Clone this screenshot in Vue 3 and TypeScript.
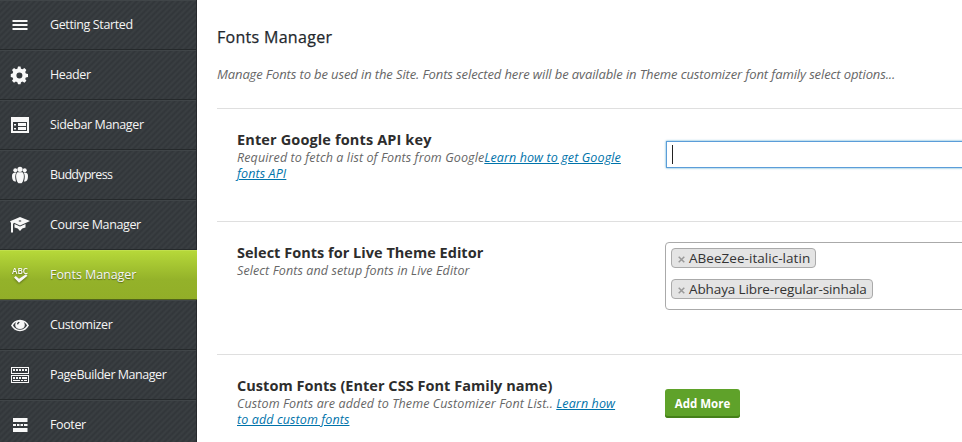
<script setup lang="ts">
interface MenuItem {
  id: string
  label: string
}

interface Chip {
  id: string
  label: string
}

const activeId = 'fonts'

const items: MenuItem[] = [
  { id: 'start', label: 'Getting Started' },
  { id: 'header', label: 'Header' },
  { id: 'sidebar', label: 'Sidebar Manager' },
  { id: 'buddypress', label: 'Buddypress' },
  { id: 'course', label: 'Course Manager' },
  { id: 'fonts', label: 'Fonts Manager' },
  { id: 'customizer', label: 'Customizer' },
  { id: 'pagebuilder', label: 'PageBuilder Manager' },
  { id: 'footer', label: 'Footer' },
]

const chips: Chip[] = [
  { id: 'abeezee', label: 'ABeeZee-italic-latin' },
  { id: 'abhaya', label: 'Abhaya Libre-regular-sinhala' },
]
</script>

<template>
  <div class="panel">
    <nav class="menu">
      <a v-for="item in items" :key="item.id" class="item" :class="{ active: item.id === activeId }">
        <svg class="icon" viewBox="0 0 20 20" width="20" height="20">
          <path v-if="item.id === 'start'" d="M2.5 5h15v2h-15zM2.5 9h15v2h-15zM2.5 13h15v2h-15z" />
          <path
            v-else-if="item.id === 'header'"
            fill-rule="evenodd"
            d="M18 12v-3l-2.2-.5-.6-1.5 1.2-1.9-2-2-1.9 1.2-1.5-.6L10.500 1.500h-2.500l-.6 2.200-1.500.6L4 3.100l-2 2L3.200 7l-.6 1.500L.8 9v3l1.800.4.6 1.500L2 15.800l2 2 1.900-1.200 1.500.6.600 2h2.500l.5-2 1.500-.6 1.900 1.200 2-2-1.200-1.900.6-1.500zM9.400 13.500a3 3 0 1 1 0-6 3 3 0 0 1 0 6z"
          />
          <path
            v-else-if="item.id === 'sidebar'"
            fill-rule="evenodd"
            d="M1 2h18v16H1zM3 7v9h14V7zM4 9h2v1.500H4zM8 8h8v3H8zM4 13h2v1.500H4zM8 12h8v3H8z"
          />
          <g v-else-if="item.id === 'buddypress'">
            <circle cx="5.300" cy="5.300" r="2" />
            <circle cx="14.700" cy="5.300" r="2" />
            <circle cx="10" cy="4.300" r="2.600" />
            <path d="M5.500 7.500C3 7.500 2 9 2 11c0 3 1 5.500 3 5.500h1C4.900 13 4.900 10 6.300 7.500zM14.500 7.500c2.500 0 3.500 1.500 3.500 3.500 0 3-1 5.500-3 5.500h-1c1.100-3.500 1.100-6.500-.3-9zM7.500 7.300h5c1.300 1 1.600 3 1.300 5.500-.4 3-1.400 5-2.300 5.400h-3c-.9-.4-1.900-2.400-2.300-5.400-.3-2.500 0-4.500 1.300-5.500z" />
          </g>
          <g v-else-if="item.id === 'course'">
            <path fill-rule="evenodd" d="M10 2l10 4-10 4.500-6-2.700L3 9v8.500H1V8L0 6.300zM10 5.200l-1.700.8 1.700.7 1.700-.7z" />
            <path d="M4.500 9L10 11.500 15.500 9v3.500l-3.200 1L10 16l-2.300-2.500-3.200-1z" />
          </g>
          <g v-else-if="item.id === 'fonts'">
            <text x="2" y="8.500" class="abc" textLength="16" lengthAdjust="spacingAndGlyphs">ABC</text>
            <path d="M4 12.500l1.800-1.600 3.200 2.800 7-4.500 1.500 1.600L9 17.700z" />
          </g>
          <path
            v-else-if="item.id === 'customizer'"
            fill-rule="evenodd"
            d="M1 10.500C3 7 6 4.800 10 4.800s7 2.200 9 5.700c-2 3.500-5 5.700-9 5.700s-7-2.200-9-5.700zM3 10.500c1.500 2.400 4 4.200 7 4.200s5.500-1.800 7-4.200C16.400 9 15.200 7.600 13.800 6.900c.7.900 1 2 1 3.200 0 2.400-2.100 4-4.800 4s-4.800-1.600-4.800-4c0-1.200.3-2.300 1-3.200C4.800 7.600 3.600 9 3 10.500zM9 6.800c-1.300.3-2 1.200-2 2.500l1.200.3c.1-1 .6-1.500 1.500-1.800z"
          />
          <path
            v-else-if="item.id === 'pagebuilder'"
            fill-rule="evenodd"
            d="M1 2h18v7H1zM2 3v5h16V3zM3 4h2v2H3zM6 4h2v2H6zM9 4h2v2H9zM12 4h2v2h-2zM15 4h2v2h-2zM1 10h18v8H1zM2 11v6h16v-6zM3 12h2v2H3zM6 12h2v2H6zM9 12h2v2H9zM12 12h5v2h-5zM3 15h7v1H3zM11 15h2v1h-2zM14 15h3v1h-3z"
          />
          <path v-else d="M3 3h14.500v4H3zM3 9h3v2H3zM7 9h2.500v2H7zM10.500 9H13v2h-2.500zM14 9h3.500v2H14zM3 13h14.500v4H3z" />
        </svg>
        <span class="label" :class="item.id">{{ item.label }}</span>
      </a>
    </nav>

    <main class="content">
      <h1>Fonts Manager</h1>
      <p class="intro">Manage Fonts to be used in the Site. Fonts selected here will be available in Theme customizer font family select options...</p>

      <section class="row">
        <div class="info">
          <h2 class="t1">Enter Google fonts API key</h2>
          <p class="d1">
            Required to fetch a list of Fonts from Google<a>Learn how to get Google<br />fonts API</a>
          </p>
        </div>
        <div class="field">
          <div class="input"><i class="caret"></i></div>
        </div>
      </section>

      <section class="row tall">
        <div class="info">
          <h2 class="t2">Select Fonts for Live Theme Editor</h2>
          <p class="d2">Select Fonts and setup fonts in Live Editor</p>
        </div>
        <div class="field">
          <div class="select">
            <span v-for="chip in chips" :key="chip.id" class="chip">
              <svg viewBox="0 0 7 7" width="7" height="7"><path d="M.7.7l5.600 5.600M6.300.7L.7 6.300" /></svg>
              <span :class="chip.id">{{ chip.label }}</span>
            </span>
          </div>
        </div>
      </section>

      <section class="row last">
        <div class="info">
          <h2 class="t3">Custom Fonts (Enter CSS Font Family name)</h2>
          <p class="d3">
            Custom Fonts are added to Theme Customizer Font List.. <a>Learn how<br />to add custom fonts</a>
          </p>
        </div>
        <div class="field">
          <button type="button">Add More</button>
        </div>
      </section>
    </main>
  </div>
</template>

<style>
body {
  background: #fff;
  overflow: hidden;
}
</style>

<style scoped>
.panel {
  display: flex;
  width: 962px;
  height: 442px;
  overflow: hidden;
  font-family: "Open Sans", "Noto Sans", sans-serif;
  background: #fff;
}
.menu {
  width: 197px;
  flex: none;
  box-sizing: border-box;
  border-right: 1px solid #26292c;
  background: repeating-linear-gradient(135deg, #32363a 0, #3a3f42 2.121px, #32363a 4.243px);
}
.item {
  display: flex;
  align-items: center;
  gap: 20px;
  height: 50px;
  padding-left: 10px;
  box-sizing: border-box;
  border-top: 1px solid #404548;
  border-bottom: 1px solid #25292b;
  color: #f5f5f5;
  font-size: 12.5px;
  line-height: 18px;
  white-space: nowrap;
}
.item.active {
  background: linear-gradient(#b6d839 0, #94b22a 60%, #92ae28 100%);
  border-top-color: #c1df4d;
  border-bottom-color: #51631a;
  margin-right: -1px;
  text-shadow: 0 1px 1px rgba(0, 0, 0, 0.4);
}
.icon {
  flex: none;
  fill: #f8f8f8;
  overflow: visible;
}
.active .icon {
  filter: drop-shadow(0 1px 1px rgba(0, 0, 0, 0.4));
}
.abc {
  font: 600 8.5px "Open Sans", sans-serif;
  text-shadow: none;
}
.label {
  letter-spacing: -0.38px;
}
.label.buddypress {
  letter-spacing: -0.68px;
}
.label.fonts {
  letter-spacing: -0.05px;
}
.label.pagebuilder {
  letter-spacing: -0.46px;
}
.content {
  flex: 1;
  min-width: 0;
  padding-left: 20px;
  white-space: nowrap;
}
h1 {
  margin: 0;
  padding-top: 25px;
  font-size: 16px;
  line-height: 24px;
  font-weight: 400;
  letter-spacing: 0.3px;
  -webkit-text-stroke: 0.25px #23282d;
  color: #23282d;
}
.intro {
  margin: 16px 0 0;
  height: 43px;
  font-size: 13px;
  line-height: 18px;
  font-style: italic;
  color: #666;
  letter-spacing: -0.115px;
}
.row {
  display: flex;
  height: 113px;
  box-sizing: border-box;
  border-top: 1px solid #dfdfdf;
  padding: 21px 0 0 20px;
}
.row.tall {
  height: 133px;
}
.info {
  width: 428px;
  flex: none;
}
h2 {
  margin: 0;
  font-size: 14.5px;
  line-height: 20px;
  font-weight: 700;
  color: #2d2d2d;
}
.t1 {
  letter-spacing: 0.13px;
}
.t2 {
  letter-spacing: 0.02px;
}
.t3 {
  letter-spacing: 0.03px;
}
.info p {
  margin: 0;
  font-size: 12.5px;
  line-height: 16px;
  font-style: italic;
  letter-spacing: 0.11px;
  color: #666;
}
.info a {
  color: #0073aa;
  text-decoration: underline;
}
.field {
  flex: 1;
  min-width: 0;
}
.input {
  height: 27px;
  width: 320px;
  box-sizing: border-box;
  margin: 11px 0 0 1px;
  padding: 3px 5px;
  border: 1px solid #5b9dd9;
  box-shadow: 0 0 2px rgba(30, 140, 190, 0.8);
}
.caret {
  display: block;
  width: 1px;
  height: 19px;
  background: #222;
}
.select {
  display: flex;
  flex-direction: column;
  align-items: flex-start;
  gap: 11px;
  width: 320px;
  height: 68px;
  box-sizing: border-box;
  padding: 5px;
  border: 1px solid #aaa;
  border-radius: 4px;
  margin-top: -1px;
}
.chip {
  display: flex;
  align-items: center;
  gap: 4px;
  height: 20px;
  box-sizing: border-box;
  padding: 0 5px 0 6px;
  border: 1px solid #aaa;
  border-radius: 4px;
  background: #e4e4e4;
  color: #333;
  font-size: 13.5px;
  line-height: 18px;
}
.abeezee {
  letter-spacing: 0.04px;
}
.abhaya {
  letter-spacing: -0.11px;
}
.chip svg {
  margin-top: 3px;
  fill: none;
  stroke: #999;
  stroke-width: 1.500;
}
button {
  display: block;
  margin-top: 13px;
  height: 29px;
  width: 75px;
  padding: 0;
  border: 0;
  border-radius: 3px;
  box-shadow: inset 0 -2px #458019;
  background: #5fa22a;
  color: #fff;
  font: 700 11.5px/27px "Open Sans", sans-serif;
}
</style>
